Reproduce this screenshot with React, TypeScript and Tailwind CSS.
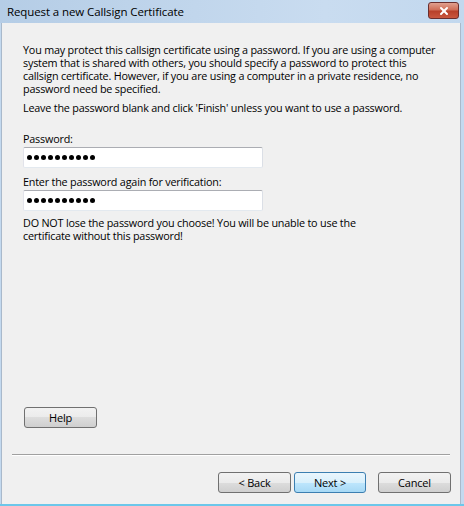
import { X } from "lucide-react";

const font = { fontFamily: '"Open Sans", "Noto Sans", sans-serif' };

function Dots() {
  return (
    <div className="flex items-center gap-[2px]">
      {Array.from({ length: 10 }).map((_, i) => (
        <span key={i} className="w-[5px] h-[5px] rounded-full bg-black" />
      ))}
    </div>
  );
}

function Field({ label }: { label: string }) {
  return (
    <div className="flex flex-col">
      <span className="h-[13px] leading-[13px]">{label}</span>
      <div className="mt-[2px] w-[240px] h-[21px] bg-white border border-[#abadb3] border-l-[#e2e3ea] border-r-[#dbdfe6] border-b-[#e3e9ef] rounded-[2px] flex items-center px-[3px]">
        <Dots />
      </div>
    </div>
  );
}

function Button({ label, primary }: { label: string; primary?: boolean }) {
  return (
    <button
      className={`w-full h-[21px] rounded-[3px] border text-[11px] text-black leading-none flex items-center justify-center ${
        primary
          ? "border-[#3c7fb1] bg-[linear-gradient(#eaf6fd_0%,#d9f0fc_50%,#bee6fd_50%,#a7d9f5_100%)]"
          : "border-[#707070] bg-[linear-gradient(#f2f2f2_0%,#ebebeb_50%,#dddddd_50%,#cfcfcf_100%)]"
      }`}
      style={font}
    >
      {label}
    </button>
  );
}

export default function App() {
  return (
    <div
      className="w-[464px] h-[506px] flex flex-col bg-[#c3d9ef] overflow-hidden text-[10.8px] tracking-[-0.2px] text-black"
      style={font}
    >
      <div className="h-[23px] flex items-center justify-between pl-[7px] pr-[5px] bg-[linear-gradient(90deg,#b5cde6,#c9dcf0_70%,#c2d8ee)]">
        <span className="text-[11.5px] tracking-[-0.1px] text-black">
          Request a new Callsign Certificate
        </span>
        <div className="w-[31px] h-[17px] mt-[-2px] rounded-[3px] border border-[#6a2e2e] bg-[linear-gradient(#e0a08f_0%,#cf6e58_45%,#b8402a_55%,#c9573f_100%)] flex items-center justify-center">
          <X size={12} strokeWidth={4} className="text-white" />
        </div>
      </div>
      <div className="flex-1 flex flex-col ml-[1px] mr-[3px] mb-[2px] border-l border-r border-[#a9b9cb] bg-[#f0f0f0]">
        <div className="flex flex-col pl-[21px] pt-[20px] leading-[13px]">
          <p className="whitespace-nowrap">
            You may protect this callsign certificate using a password. If you are using a computer
            <br />
            system that is shared with others, you should specify a password to protect this
            <br />
            callsign certificate. However, if you are using a computer in a private residence, no
            <br />
            password need be specified.
          </p>
          <p className="mt-[6px] whitespace-nowrap">
            Leave the password blank and click 'Finish' unless you want to use a password.
          </p>
          <div className="mt-[18px] flex flex-col gap-[7px]">
            <Field label="Password:" />
            <Field label="Enter the password again for verification:" />
          </div>
          <p className="mt-[5px] whitespace-nowrap">
            DO NOT lose the password you choose! You will be unable to use the
            <br />
            certificate without this password!
          </p>
        </div>
        <div className="flex-1" />
        <div className="pl-[22px]">
          <div className="w-[73px]">
            <Button label="Help" />
          </div>
        </div>
        <div className="mt-[26px] mx-[10px] h-[2px] border-t border-[#a0a0a0] border-b border-b-white" />
        <div className="flex justify-end gap-[3px] pr-[9px] pt-[16px] pb-[11px]">
          <div className="w-[73px]">
            <Button label="< Back" />
          </div>
          <div className="w-[72px]">
            <Button label="Next >" primary />
          </div>
          <div className="w-[73px] ml-[9px]">
            <Button label="Cancel" />
          </div>
        </div>
      </div>
      <div className="h-[2px] bg-[#6cc7ea] -mt-[2px]" />
    </div>
  );
}
